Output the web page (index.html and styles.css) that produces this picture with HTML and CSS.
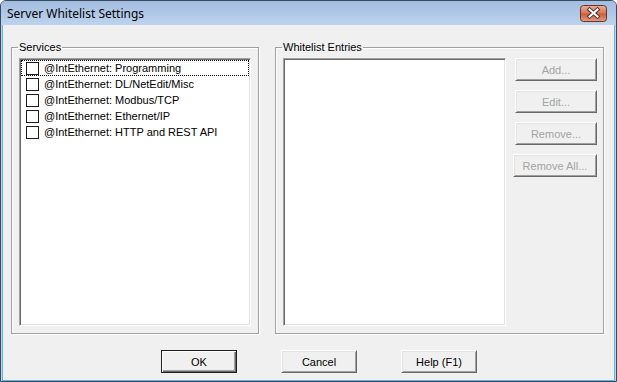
FILE: index.html
```html
<!DOCTYPE html>
<html lang="en">
<head>
  <meta charset="UTF-8" />
  <title>Server Whitelist Settings</title>
  <link rel="stylesheet" href="styles.css">
</head>
<body>
  <div class="window">
    <div class="titlebar">
      <span class="title">Server Whitelist Settings</span>
      <button class="close" title="Close">
        <svg width="27" height="17" viewBox="0 0 27 17">
          <defs>
            <linearGradient id="closeBg" x1="0" y1="0" x2="0" y2="1">
              <stop offset="0" stop-color="#eab09a"/>
              <stop offset="0.45" stop-color="#d8795b"/>
              <stop offset="0.55" stop-color="#c9603f"/>
              <stop offset="1" stop-color="#e6a083"/>
            </linearGradient>
          </defs>
          <rect x="0.5" y="0.5" width="26" height="16" rx="3" fill="url(#closeBg)" stroke="#6a3424"/>
          <path d="M9.5 4.5 L17.5 11.5 M17.5 4.5 L9.5 11.5" stroke="#4a3530" stroke-width="4" stroke-linecap="square"/>
          <path d="M9.5 4.5 L17.5 11.5 M17.5 4.5 L9.5 11.5" stroke="#fff" stroke-width="2" stroke-linecap="square"/>
        </svg>
      </button>
    </div>

    <div class="client">
      <div class="groups">
        <fieldset class="group services">
          <legend>Services</legend>
          <ul class="list services-list">
            <li class="item focused"><span class="check"></span>@IntEthernet: Programming</li>
            <li class="item"><span class="check"></span>@IntEthernet: DL/NetEdit/Misc</li>
            <li class="item"><span class="check"></span>@IntEthernet: Modbus/TCP</li>
            <li class="item"><span class="check"></span>@IntEthernet: Ethernet/IP</li>
            <li class="item"><span class="check"></span>@IntEthernet: HTTP and REST API</li>
          </ul>
        </fieldset>

        <fieldset class="group entries">
          <legend>Whitelist Entries</legend>
          <div class="entries-body">
            <div class="list entries-list"></div>
            <div class="side-buttons">
              <button class="btn side" disabled>Add...</button>
              <button class="btn side" disabled>Edit...</button>
              <button class="btn side" disabled>Remove...</button>
              <button class="btn side wide" disabled>Remove All...</button>
            </div>
          </div>
        </fieldset>
      </div>

      <div class="footer">
        <button class="btn default">OK</button>
        <button class="btn">Cancel</button>
        <button class="btn">Help (F1)</button>
      </div>
    </div>
  </div>
</body>
</html>
```

FILE: styles.css
```css
* {
  box-sizing: border-box;
}

body {
  margin: 0;
  background: #ffffff;
  font-family: "Liberation Sans", Arial, sans-serif;
  font-size: 11px;
  color: #000;
}

.window {
  width: 617px;
  height: 382px;
  border: 1px solid #3a4a5e;
  border-radius: 6px 6px 0 0;
  background: #c2d6ef;
  display: flex;
  flex-direction: column;
  overflow: hidden;
}

.titlebar {
  height: 24px;
  flex: none;
  display: flex;
  align-items: flex-start;
  justify-content: space-between;
  padding: 0 9px 0 6px;
  background: linear-gradient(to bottom, #a3bde0, #b2cae9 60%, #bdd3ef);
}

.title {
  font-family: "Noto Sans", "Open Sans", sans-serif;
  font-size: 12px;
  line-height: 16px;
  padding-top: 5px;
  color: #000;
}

.close {
  margin-top: 4px;
  padding: 0;
  border: none;
  background: none;
  width: 27px;
  height: 17px;
  display: block;
}

.close svg {
  display: block;
}

.client {
  flex: 1;
  margin: 0 1px;
  background: #f0f0f0;
  border: 1px solid #5fb2e4;
  border-top: none;
  padding: 16px 0 0 8px;
}

.groups {
  display: flex;
  gap: 16px;
}

.group {
  margin: 0;
  border: 1px solid #a0a0a0;
  box-shadow: inset 1px 1px 0 #fff, 1px 1px 0 #fff;
  padding: 4px 7px 7px 7px;
  min-width: 0;
}

.group legend {
  padding: 0 1px;
  margin-left: -1px;
  line-height: 13px;
  font-size: 11px;
}

.services {
  width: 248px;
}

.entries {
  width: 329px;
  padding-right: 6px;
}

.list {
  margin: 0;
  padding: 0;
  list-style: none;
  background: #fff;
  height: 268px;
  border: 1px solid;
  border-color: #a0a0a0 #fff #fff #a0a0a0;
  box-shadow: inset 1px 1px 0 #696969, inset -1px -1px 0 #e3e3e3;
}

.services-list {
  width: 232px;
  padding: 1px;
}

.item {
  height: 16px;
  line-height: 14px;
  display: flex;
  align-items: center;
  padding-left: 4px;
  border: 1px solid transparent;
  white-space: nowrap;
}

.item.focused {
  border: 1px dotted #000;
}

.check {
  width: 13px;
  height: 13px;
  border: 1px solid #1c1c1c;
  background: #fff;
  margin-right: 5px;
  flex: none;
}

.entries-body {
  display: flex;
}

.entries-list {
  width: 223px;
}

.side-buttons {
  flex: 1;
  display: flex;
  flex-direction: column;
  align-items: flex-end;
  gap: 9px;
}

.btn {
  font-family: "Liberation Sans", Arial, sans-serif;
  font-size: 11px;
  width: 76px;
  height: 23px;
  padding: 0;
  background: #f0f0f0;
  color: #000;
  border: 1px solid;
  border-color: #fff #696969 #696969 #fff;
  box-shadow: inset 1px 1px 0 #e3e3e3, inset -1px -1px 0 #a0a0a0;
}

.btn:disabled {
  color: #a3a3a3;
}

.side {
  width: 82px;
}

.side.wide {
  width: 84px;
}

.btn.default {
  border: 1px solid #1e1e1e;
  box-shadow: inset 1px 1px 0 #fff, inset -1px -1px 0 #696969, inset -2px -2px 0 #a0a0a0;
}

.footer {
  display: flex;
  gap: 44px;
  padding-left: 150px;
  margin-top: 16px;
}
```
